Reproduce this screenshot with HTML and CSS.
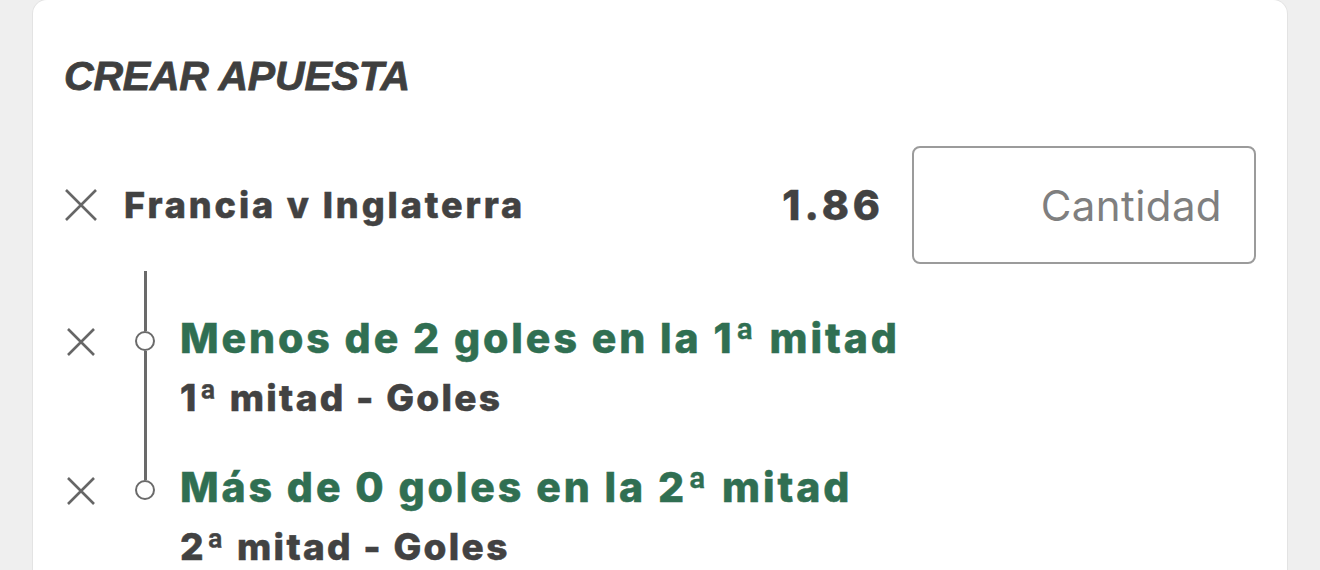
FILE: index.html
```html
<!DOCTYPE html>
<html>
<head>
    <meta charset="UTF-8">
    <meta name="viewport" content="width=device-width, initial-scale=1.0">
    <title>Crear apuesta</title>
    <link rel="stylesheet" href="styles.css">
</head>
<body>
    <div class="betslip">
        <h2 class="betslip-title">CREAR APUESTA</h2>
        <div class="event-row">
            <button class="remove" aria-label="Quitar">
                <svg viewBox="0 0 34 34" width="34" height="34"><path d="M2 2 L32 32 M32 2 L2 32"/></svg>
            </button>
            <span class="event-name">Francia v Inglaterra</span>
            <span class="odds">1.86</span>
            <input class="stake" type="text" placeholder="Cantidad">
        </div>
        <ul class="legs">
            <li class="leg">
                <button class="remove small" aria-label="Quitar">
                    <svg viewBox="0 0 30 30" width="30" height="30"><path d="M2 2 L28 28 M28 2 L2 28"/></svg>
                </button>
                <div class="track"><span class="seg"></span><span class="dot"></span><span class="seg grow"></span></div>
                <div class="leg-text">
                    <div class="selection">Menos de 2 goles en la 1ª mitad</div>
                    <div class="market">1ª mitad - Goles</div>
                </div>
            </li>
            <li class="leg">
                <button class="remove small" aria-label="Quitar">
                    <svg viewBox="0 0 30 30" width="30" height="30"><path d="M2 2 L28 28 M28 2 L2 28"/></svg>
                </button>
                <div class="track"><span class="seg"></span><span class="dot"></span><span class="seg grow"></span></div>
                <div class="leg-text">
                    <div class="selection">Más de 0 goles en la 2ª mitad</div>
                    <div class="market">2ª mitad - Goles</div>
                </div>
            </li>
        </ul>
    </div>
</body>
</html>
```

FILE: styles.css
```css
html, body {
    margin: 0;
    background: #efefef;
    height: 100%;
    overflow: hidden;
}
body {
    font-family: Inter, "Noto Sans", sans-serif;
    color: #424242;
    padding-left: 33px;
}
.betslip {
    box-sizing: border-box;
    width: 1254px;
    min-height: 600px;
    background: #ffffff;
    border-radius: 14px 14px 0 0;
    box-shadow: 0 0 0 1px #e3e3e3;
    padding: 0 31px;
}
.betslip-title {
    margin: 0;
    height: 146px;
    display: flex;
    align-items: center;
    padding-top: 7px;
    box-sizing: border-box;
    font-family: "Liberation Sans", Arial, sans-serif;
    font-style: italic;
    font-weight: bold;
    font-size: 41px;
    letter-spacing: -0.2px;
    -webkit-text-stroke: 0.8px #3f3f3f;
    color: #3f3f3f;
}
.event-row {
    display: flex;
    align-items: center;
    height: 118px;
}
.remove {
    border: none;
    background: none;
    padding: 0;
    display: flex;
}
.remove svg {
    stroke: #666666;
    stroke-width: 2.6;
    fill: none;
}
.remove.small {
    margin-left: 2px;
}
/* bold labels are drawn a touch heavier than Inter 800 */
.event-name, .odds, .selection, .market {
    font-weight: 800;
    -webkit-text-stroke: 0.5px currentColor;
}
.event-name {
    margin-left: 26px;
    font-size: 36px;
    letter-spacing: 2.9px;
}
.odds {
    margin-left: auto;
    margin-right: 28px;
    font-size: 41px;
    letter-spacing: 4px;
}
.stake {
    box-sizing: border-box;
    width: 344px;
    height: 118px;
    border: 2px solid #9b9b9b;
    border-radius: 8px;
    padding: 0 32px 0 0;
    text-align: right;
    font-family: Inter, "Noto Sans", sans-serif;
    font-size: 42px;
    letter-spacing: 0.4px;
    color: #424242;
}
.stake::placeholder {
    color: #7f7f7f;
}
.legs {
    list-style: none;
    margin: 7px 0 0;
    padding: 0;
}
.leg {
    display: flex;
    height: 149px;
}
.leg .remove {
    align-self: flex-start;
    margin-top: 56px;
}
.track {
    width: 34px;
    margin-left: 32px;
    display: flex;
    flex-direction: column;
    align-items: center;
}
.seg {
    width: 3px;
    height: 60px;
    background: #6a6a6a;
}
.seg.grow {
    flex: 1;
}
.leg:last-child .seg.grow {
    visibility: hidden;
}
.dot {
    box-sizing: border-box;
    width: 20px;
    height: 20px;
    border: 2.5px solid #6a6a6a;
    border-radius: 50%;
}
.leg-text {
    margin-left: 18px;
    padding-top: 43px;
}
.selection {
    font-size: 41px;
    line-height: 48px;
    letter-spacing: 2.9px;
    color: #306f52;
}
.market {
    font-size: 37px;
    line-height: 48px;
    letter-spacing: 2.3px;
    margin-top: 12px;
}
```
